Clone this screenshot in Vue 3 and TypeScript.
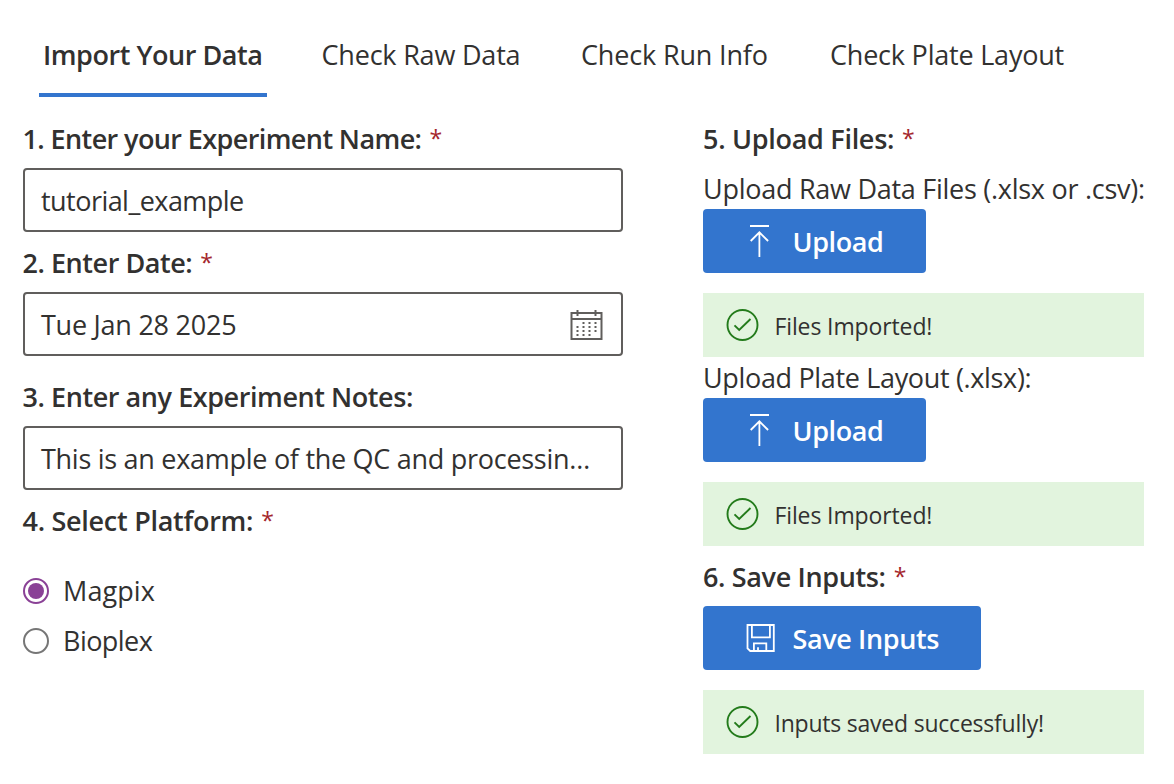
<script setup lang="ts">
import { ref } from 'vue'

interface Tab { name: string; cls: string }

const tabs: Tab[] = [
  { name: 'Import Your Data', cls: 't-import' },
  { name: 'Check Raw Data', cls: 't-raw' },
  { name: 'Check Run Info', cls: 't-run' },
  { name: 'Check Plate Layout', cls: 't-plate' },
]
const activeTab = ref(0)
const experiment = ref('tutorial_example')
const notes = ref('This is an example of the QC and processin…')
const platforms = [
  { name: 'Magpix', cls: 'r-magpix' },
  { name: 'Bioplex', cls: 'r-bioplex' },
]
const platform = ref('Magpix')
const uploads = [
  { label: 'Upload Raw Data Files (.xlsx or .csv):', cls: 'u-raw' },
  { label: 'Upload Plate Layout (.xlsx):', cls: 'u-plate' },
]
</script>

<template>
  <main class="page">
    <nav class="tabs">
      <button v-for="(tab, i) in tabs" :key="tab.name" class="tab" :class="[tab.cls, { active: activeTab === i }]" @click="activeTab = i">
        <span>{{ tab.name }}</span>
      </button>
    </nav>
    <div class="columns">
      <section class="left">
        <h2 class="l-name"><span>1. Enter your Experiment Name:</span><i>*</i></h2>
        <div class="field"><span class="value f-name">{{ experiment }}</span></div>
        <h2 class="l-date"><span>2. Enter Date:</span><i>*</i></h2>
        <div class="field date">
          <span class="value f-date">Tue Jan 28 2025</span>
          <svg class="calendar" width="34" height="32" viewBox="0 0 34 32" fill="none" stroke="#605e5c" stroke-width="2">
            <path d="M1.500 3H31.500V29H1.500ZM1.500 9H31.500M7.500 0V6M25.500 0V6" />
            <path d="M12.500 13H14.500M18.500 13H20.500M24.500 13H26.500M6.500 17H8.500M12.500 17H14.500M18.500 17H20.500M24.500 17H26.500M6.500 21H8.500M12.500 21H14.500M18.500 21H20.500M24.500 21H26.500M6.500 25H8.500M12.500 25H14.500M18.500 25H20.500" />
          </svg>
        </div>
        <h2 class="l-notes"><span>3. Enter any Experiment Notes:</span></h2>
        <div class="field"><span class="value f-notes">{{ notes }}</span></div>
        <h2 class="l-platform"><span>4. Select Platform:</span><i>*</i></h2>
        <div class="radios">
          <label v-for="p in platforms" :key="p.name" class="radio" @click="platform = p.name">
            <span class="dot" :class="{ checked: platform === p.name }"></span>
            <span :class="p.cls">{{ p.name }}</span>
          </label>
        </div>
      </section>
      <section class="right">
        <h2 class="l-files"><span>5. Upload Files:</span><i>*</i></h2>
        <div v-for="u in uploads" :key="u.label" class="upload">
          <p :class="u.cls"><span>{{ u.label }}</span></p>
          <button class="primary">
            <svg class="b-icon" width="32" height="34" viewBox="0 0 32 34" fill="none" stroke="#fff" stroke-width="1.8">
              <path d="M7 2H26M16.400 33V8M7.700 17L16.400 8.300L25.100 17" />
            </svg>
            <span class="b-upload">Upload</span>
          </button>
          <div class="message">
            <svg width="34" height="34" viewBox="0 0 34 34" fill="none" stroke="#237b1b" stroke-width="1.9">
              <circle cx="16.500" cy="17" r="15" /><path d="M8.500 17.300L13.200 22L24.500 11" />
            </svg>
            <span class="m-files">Files Imported!</span>
          </div>
        </div>
        <h2 class="l-save"><span>6. Save Inputs:</span><i>*</i></h2>
        <button class="primary save">
          <svg class="b-icon" width="32" height="34" viewBox="0 0 32 34" fill="none" stroke="#fff" stroke-width="1.8">
            <path d="M4.500 4H30.800V30H7.300L4.500 27.300ZM8.900 4V16.400H26.900V4M10.900 30V22.300H23.300V30M15 30V26.300" />
          </svg>
          <span class="b-save">Save Inputs</span>
        </button>
        <div class="message">
          <svg width="34" height="34" viewBox="0 0 34 34" fill="none" stroke="#237b1b" stroke-width="1.9">
            <circle cx="16.500" cy="17" r="15" /><path d="M8.500 17.300L13.200 22L24.500 11" />
          </svg>
          <span class="m-saved">Inputs saved successfully!</span>
        </div>
      </section>
    </div>
  </main>
</template>

<style>
body { margin: 0; background: #fff; }
</style>

<style scoped>
* { box-sizing: border-box; }
.page { width: 1174px; height: 784px; overflow: hidden; font-family: "Open Sans", "Noto Sans", sans-serif; font-size: 27px; line-height: 40px; color: #323130; white-space: nowrap; }
button { font: inherit; color: inherit; border: 0; padding: 0; background: none; text-align: left; white-space: nowrap; }
.tabs { display: grid; grid-template-columns: 228px 228px 217px 240px; column-gap: 32px; height: 97px; padding-left: 39px; }
.tab { padding: 16px 0 0 4px; border-bottom: 4px solid transparent; }
.tab.t-raw { margin-left: 18.5px; }
.tab.t-run { margin-left: 18px; }
.tab.t-plate { margin-left: 18px; }
.tab.active { font-weight: 600; border-color: #3375ce; }
.t-import { letter-spacing: -0.45px; }
.t-raw { letter-spacing: -0.2px; }
.t-run { letter-spacing: -0.16px; }
.t-plate { letter-spacing: -0.21px; }
.columns { display: flex; gap: 80px; padding: 22px 0 0 23px; }
.left { width: 600px; }
.right { width: 441px; }
h2 { display: flex; margin: 0; height: 40px; font-size: inherit; font-weight: 600; }
h2 i { margin-left: 8px; font-size: 23px; line-height: 38px; font-style: normal; font-weight: 500; color: #a4262c; }
.left h2 { margin-left: -0.5px; }
.l-name { letter-spacing: -0.6px; }
.l-date { letter-spacing: -0.45px; }
.l-notes { letter-spacing: -0.43px; }
.l-platform { letter-spacing: -0.28px; }
.l-files { letter-spacing: -0.29px; }
.l-save { letter-spacing: -0.35px; height: 49px; margin-top: 11px; }
.field { display: flex; align-items: center; justify-content: space-between; height: 64px; margin: 9px 0 11px; padding: 0 16px; border: 2px solid #605e5c; border-radius: 4px; }
.field.date { margin-bottom: 21px; }
.value { padding-top: 2px; }
.f-name { letter-spacing: -0.54px; }
.f-date { letter-spacing: -0.25px; }
.f-notes { letter-spacing: -0.28px; }
.calendar { margin: 3px 1px 0 0; }
.radios { padding-top: 25px; }
.radio { display: flex; align-items: center; gap: 14px; height: 50px; }
.r-magpix { letter-spacing: 0.1px; }
.r-bioplex { letter-spacing: -0.55px; }
.dot { display: flex; width: 26px; height: 26px; border: 2px solid #767676; border-radius: 50%; }
.dot.checked { border-color: #8a4196; }
.dot.checked::after { content: ""; width: 16px; height: 16px; margin: 3px; border-radius: 50%; background: #8a4196; }
p { margin: 0; }
.u-raw { height: 50px; padding-top: 10px; letter-spacing: -0.27px; }
.u-plate { height: 41px; padding-top: 1px; letter-spacing: -0.34px; }
.primary { display: flex; align-items: center; width: 223px; height: 64px; padding-left: 40px; border-radius: 4px; background: #3375ce; color: #fff; font-weight: 600; }
.primary.save { width: 278px; }
.primary span { padding-top: 2px; }
.b-icon { margin-right: 17.5px; }
.b-upload { letter-spacing: -0.4px; }
.b-save { letter-spacing: -0.38px; }
.message { display: flex; align-items: center; gap: 15px; height: 64px; margin-top: 20px; padding-left: 22.5px; background: #e2f4de; font-size: 23px; }
.message span { padding-top: 1px; }
.m-files { letter-spacing: -0.12px; }
.m-saved { letter-spacing: -0.22px; }
</style>
